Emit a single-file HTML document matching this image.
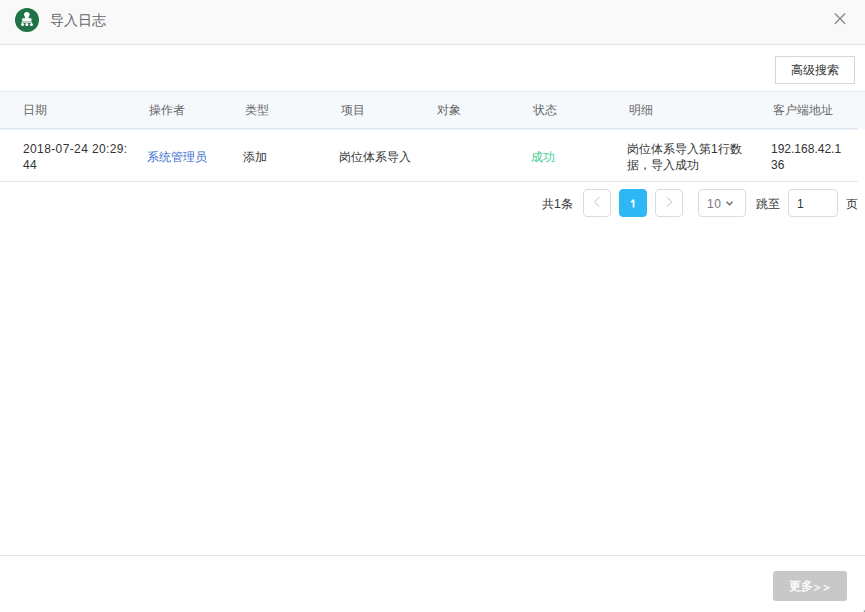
<!DOCTYPE html>
<html><head><meta charset="utf-8">
<style>
*{margin:0;padding:0;box-sizing:border-box}
html,body{width:865px;height:612px;overflow:hidden;background:#fff;font-family:"Liberation Sans",sans-serif;font-size:12px;color:#333}
.abs{position:absolute}
#hd{left:0;top:0;width:865px;height:45px;background:#f9f9f9;border-bottom:1px solid #e5e5e5}
#ico{left:15px;top:8px;width:24px;height:24px}
#title{left:50px;top:11px;font-size:14px;color:#666;line-height:18px;white-space:nowrap}
#close{left:832px;top:11px;width:16px;height:16px}
#adv{left:775px;top:56px;width:80px;height:28px;border:1px solid #d6d6d6;background:#fff;color:#333;text-align:center;line-height:26px;font-size:12px}
#th{left:0;top:91px;width:865px;height:38px;background:#f6f9fc;border-top:1px solid #e8e8e8}
#thb{left:0;top:128px;width:858px;height:2px;background:linear-gradient(#dde6ee 50%,#eaf0f5 50%)}
.h{position:absolute;top:104px;line-height:12px;color:#666;white-space:nowrap}
.c{position:absolute;line-height:16px;color:#333;white-space:nowrap}
#rowb{left:0;top:181px;width:858px;height:1px;background:#e6e6e6}
.pg{position:absolute;top:189px;height:28px;border:1px solid #dcdcdc;border-radius:4px;background:#fff}
#ft{left:0;top:555px;width:865px;height:1px;background:#e5e5e5}
#more{left:773px;top:571px;width:74px;height:30px;background:#c8c8c8;border-radius:3px;color:#fff;text-align:center;line-height:30px;font-size:12px}
</style></head><body>
<div id="hd" class="abs"></div>
<svg id="ico" class="abs" viewBox="0 0 24 24">
<circle cx="12" cy="12" r="12" fill="#1f7346"/>
<ellipse cx="11.8" cy="6.4" rx="2.8" ry="2.5" fill="#fff"/>
<rect x="10" y="8" width="3.6" height="2.6" fill="#fff"/>
<rect x="7.1" y="10.2" width="9.4" height="2.9" rx="0.8" fill="#fff"/>
<rect x="7.1" y="13.1" width="9.4" height="0.6" fill="#fff" opacity="0.75"/>
<rect x="6.5" y="13.7" width="10.5" height="1" fill="#fff"/>
<circle cx="7.55" cy="16.4" r="1.5" fill="#fff"/>
<circle cx="11.8" cy="16.4" r="1.5" fill="#fff"/>
<circle cx="16.45" cy="16.4" r="1.5" fill="#fff"/>
</svg>
<div id="title" class="abs">导入日志</div>
<svg id="close" class="abs" viewBox="0 0 16 16"><path d="M2.9 2.5L13.1 12.7M13.1 2.5L2.9 12.7" stroke="#8a8a8a" stroke-width="1.4"/></svg>

<div id="adv" class="abs">高级搜索</div>

<div id="th" class="abs"></div>
<div id="thb" class="abs"></div>
<div class="h" style="left:23px">日期</div>
<div class="h" style="left:149px">操作者</div>
<div class="h" style="left:245px">类型</div>
<div class="h" style="left:341px">项目</div>
<div class="h" style="left:437px">对象</div>
<div class="h" style="left:533px">状态</div>
<div class="h" style="left:629px">明细</div>
<div class="h" style="left:773px">客户端地址</div>

<div class="c" style="left:23px;top:141px;letter-spacing:0.38px">2018-07-24 20:29:<br>44</div>
<div class="c" style="left:147px;top:149px;color:#3b6fd2">系统管理员</div>
<div class="c" style="left:243px;top:149px">添加</div>
<div class="c" style="left:339px;top:149px">岗位体系导入</div>
<div class="c" style="left:531px;top:149px;color:#42cc91">成功</div>
<div class="c" style="left:627px;top:141px">岗位体系导入第1行数<br>据，导入成功</div>
<div class="c" style="left:771px;top:141px">192.168.42.1<br>36</div>
<div id="rowb" class="abs"></div>

<div class="c" style="left:542px;top:196px">共1条</div>
<div class="pg" style="left:583px;width:28px"><svg width="26" height="26" style="position:absolute;left:0;top:0"><path d="M15.3 7.2L10.6 11.9L15.3 16.6" fill="none" stroke="#c3c3c3" stroke-width="1"/></svg></div>
<div class="pg" style="left:619px;width:28px;background:#2db7f5;border-color:#2db7f5;color:#fff;text-align:center;"><svg width="26" height="26" style="position:absolute;left:0;top:0"><path d="M13.6 9.4V17.6M13.6 9.6Q12.8 11.2 11 12" fill="none" stroke="#fff" stroke-width="1.7"/></svg></div>
<div class="pg" style="left:655px;width:28px"><svg width="26" height="26" style="position:absolute;left:0;top:0"><path d="M11 7.2L15.7 11.9L11 16.6" fill="none" stroke="#c3c3c3" stroke-width="1"/></svg></div>
<div class="pg" style="left:698px;width:48px"></div>
<div class="c" style="left:707px;top:196px;color:#777;letter-spacing:0.5px">10</div><svg class="abs" style="left:724px;top:199px" width="12" height="10"><path d="M2.5 2.8L5.5 5.8L8.5 2.8" fill="none" stroke="#666" stroke-width="1.3"/></svg>
<div class="c" style="left:756px;top:196px">跳至</div>
<div class="pg" style="left:788px;width:50px"></div>
<div class="c" style="left:797px;top:196px">1</div>
<div class="c" style="left:846px;top:196px">页</div>

<div id="ft" class="abs"></div>
<div id="more" class="abs"></div><div class="abs" style="left:789px;top:579px;line-height:14px;color:#fff;-webkit-text-stroke:0.35px #fff;white-space:nowrap">更多</div><svg class="abs" style="left:810px;top:580px" width="24" height="14"><path d="M4.4 5.2L9.6 7.7L4.4 10.2M13.6 5.2L18.8 7.7L13.6 10.2" fill="none" stroke="#fff" stroke-width="1.25"/></svg>
<div class="abs" style="left:863px;top:609px;width:3px;height:3px;border-radius:3px 0 0 0;background:radial-gradient(circle at 100% 100%,#666 0,#999 1.5px,rgba(255,255,255,0) 3px)"></div>
</body></html>
